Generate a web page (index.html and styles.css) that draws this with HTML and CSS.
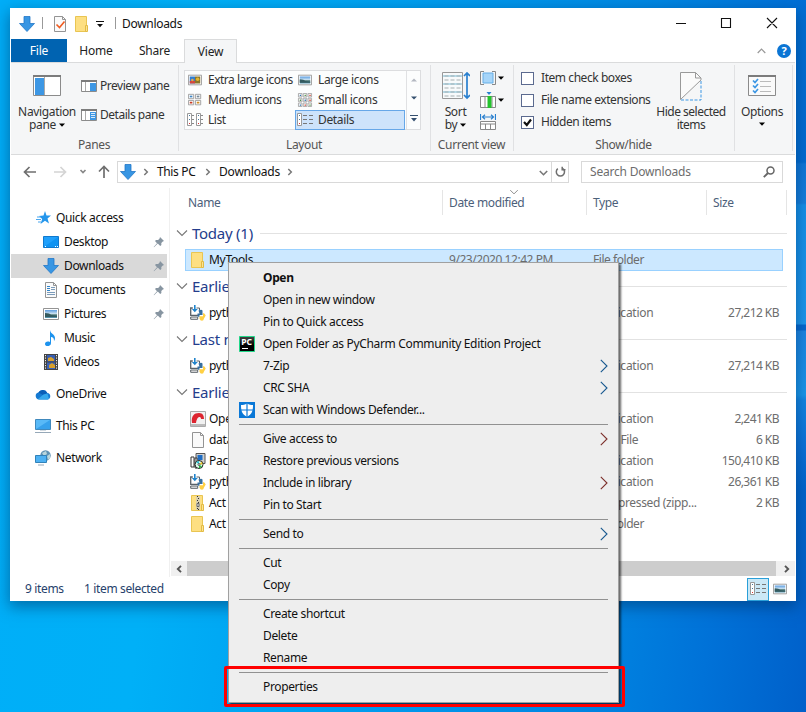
FILE: index.html
```html
<!DOCTYPE html>
<html lang="en">
<head>
<meta charset="utf-8">
<title>Downloads</title>
<link rel="stylesheet" href="styles.css">
</head>
<body>
<svg class="defs" width="0" height="0" aria-hidden="true">
  <defs>
    <linearGradient id="gPic" x1="0" y1="0" x2="0" y2="1"><stop offset="0" stop-color="#5a9ce0"/><stop offset=".5" stop-color="#d4e8f4"/><stop offset=".6" stop-color="#3e6a66"/><stop offset="1" stop-color="#5a9ab8"/></linearGradient>
    <linearGradient id="gDark" x1="0" y1="0" x2="0" y2="1"><stop offset="0" stop-color="#444"/><stop offset=".6" stop-color="#000"/></linearGradient>
    <symbol id="down" viewBox="0 0 16 16"><path d="M5 .5h6v7h4.500L8 15.500.5 7.500H5z" fill="#3896e3" stroke="#2277c8" stroke-width=".8"/></symbol>
    <symbol id="folder" viewBox="0 0 16 16"><path d="M1.500.5h11v15h-11z" fill="#fddf82" stroke="#e9c552"/><path d="M11.500 9.500h2v6h-2z" fill="#fbe394" stroke="#e3bb43"/></symbol>
    <symbol id="zip" viewBox="0 0 16 16"><use href="#folder"/><path d="M6 1h4v14H6z" fill="#d9cfae"/><path d="M7 1h1v1H7zm1 2h1v1H8zM7 5h1v1H7zm1 2h1v1H8zm-1 6h1v1H7zm1 1h1v1H8z" fill="#333"/><path d="M7 8.500h2v3H7z" fill="#eee" stroke="#666"/></symbol>
    <symbol id="file" viewBox="0 0 16 16"><path d="M2.500.5h8l3 3v12h-11z" fill="#fafafa" stroke="#949494"/><path d="M10.500.5v3h3" fill="none" stroke="#949494"/></symbol>
    <symbol id="doc" viewBox="0 0 16 16"><use href="#file"/><path d="M4 4.500h3M4 6.500h3M4 8.500h3" stroke="#2f83ca"/><path d="M8 5.500h4M8 7.500h4M4 10.500h8M4 12.500h8" stroke="#7c9cba"/></symbol>
    <symbol id="desk" viewBox="0 0 16 16"><path d="M.5 2.500h15v11H.5z" fill="#20a0fb" stroke="#1079ce"/><path d="M1 13L15 3v10z" fill="#0f93f2"/><path d="M2 12.500h1m9 0h1m1 0h1" stroke="#fff"/></symbol>
    <symbol id="pic" viewBox="0 0 16 16"><path d="M.5 2.500h15v11H.5z" fill="#fff" stroke="#949494"/><path d="M2 4h12v8H2z" fill="url(#gPic)"/><path d="M2 7q5 0 6 2l6 1v1H2z" fill="#345b60"/></symbol>
    <symbol id="picx" viewBox="0 0 16 16"><path d="M.5 2.500h15v11H.5z" fill="#fff" stroke="#949494"/><path d="M2 4h6v8H2z" fill="#327ed2"/><path d="M8 4h6v8H8z" fill="#8b762c"/><path d="M2 9h6v3H2z" fill="#d6463a"/><circle cx="11" cy="7" r="2" fill="#e4b632"/><circle cx="5" cy="8" r="1.500" fill="#e2a850"/></symbol>
    <symbol id="music" viewBox="0 0 16 16"><path d="M7 0c.5 4 5 4 5 8 0 2-1 3-1 3 0-3-1-4-3-4v6c0 4-6 4-6 1 0-2 2-3 5-2z" fill="#1d93ee"/></symbol>
    <symbol id="video" viewBox="0 0 16 16"><path d="M1 0h14v16H1z" fill="#444"/><path d="M4 1h8v6.500H4z" fill="#365db0"/><path d="M4 8.500h8V15H4z" fill="#3c62b7"/><path d="M5 4l3-1 3 2v2H5zm1 7l3-2 3 2v3H6z" fill="#d8a02c"/><path d="M2.500 1v15M13.500 1v15" stroke="#eee" stroke-dasharray="1.200 1.300"/></symbol>
    <symbol id="star" viewBox="0 0 16 16"><path d="M9 1l1.500 4.500H15l-3.500 3 1.500 5L9 10.700 4.500 14l1.700-5L3 6l4.500-.5z" fill="#2496ec"/><path d="M1 7h4M0 9.500h5M2 12h3" stroke="#4aa7ef"/></symbol>
    <symbol id="cloud" viewBox="0 0 16 16"><path d="M4 13.500a3.500 3.500 0 0 1-.6-6.900A5 5 0 0 1 12.300 7a3.300 3.300 0 0 1 .4 6.500z" fill="#1479d2"/><path d="M3.400 6.600A5 5 0 0 1 12.300 7L8 9z" fill="#0a5fb8"/><path d="M3 13l5.500-4.500 4-1 1.500 5.500-1.300.5H4z" fill="#35a8ec"/></symbol>
    <symbol id="pc" viewBox="0 0 16 16"><path d="M.5 1.500h15v10H.5z" fill="#58b9f7" stroke="#4089bd"/><path d="M1 11L15 2v9z" fill="#36a1ec"/><path d="M0 14.500h16" stroke="#96a8b8"/><path d="M5 12.500h6" stroke="#d3dbe2"/></symbol>
    <symbol id="net" viewBox="0 0 16 16"><circle cx="10.500" cy="5.500" r="5.200" fill="#5f92b4"/><path d="M7 3l4-2 1 3-3 2zM12 6l3-2v4l-2 2z" fill="#bad6dc"/><path d="M.5 5.500h11v7H.5z" fill="#4db1f3" stroke="#3182b9"/><path d="M3 15h6" stroke="#96a8b8"/></symbol>
    <symbol id="pin" viewBox="0 0 12 12"><path d="M7 1l4 4-1.200.4-1.500 1.500.1 2.100-1.200 1-2.400-2.400L1 11.300.7 11 4 7.200 2 5l1-1 2.100.1 1.500-1.600z" fill="#8795a1"/></symbol>
    <symbol id="py" viewBox="0 0 16 16"><path d="M2.800 3H.7v7.300H8" fill="none" stroke="#5a6268" stroke-width="1.300"/><path d="M6.500 3h3v2.500" fill="none" stroke="#5a6268"/><path d="M.7 12h7v2.300H.7z" fill="#eee" stroke="#5a6268"/><path d="M4 0h1.600v4h2.200L4.800 7.300 1.800 4H4z" fill="#2084cc"/><path d="M8.500 5.500q3-1.500 4 0v4.500H9.500v2l-2-.5V8.500h2z" fill="#376f9f"/><path d="M13 8q2 0 2.700 2.500L14 13.500q-.5 2.300-2 2.300-2 0-2.500-2v-2.500H13z" fill="#ffd043"/></symbol>
    <symbol id="open" viewBox="0 0 16 16"><path d="M.5.500h15v15H.5z" fill="#f1f1f1" stroke="#aaa"/><path d="M2 12C1 5 4 2 9 2c4 0 5 3 5 6h-3c0-3-4-3-5 4z" fill="#dd2530"/><path d="M1 13h14v2H1z" fill="#bbb"/></symbol>
    <symbol id="pack" viewBox="0 0 16 16"><path d="M6 .5h9v10H6z" fill="#d0d0d0" stroke="#555"/><path d="M7.500 2h5v5h-5z" fill="#1d6cc4"/><path d="M1 4h3v10H1zm4 1h2v10H5z" fill="#fff" stroke="#333"/><circle cx="9" cy="11.500" r="4" fill="#dfe" stroke="#222"/><path d="M9 11.500L6 9l3-1z" fill="#26c2d8"/><path d="M9 11.500l3 2-3 2z" fill="#22b63a"/><path d="M9 11.500l3-3 .5 3z" fill="#ecc22c"/><circle cx="9" cy="11.500" r="1" fill="#fff" stroke="#555"/></symbol>
    <symbol id="pycharm" viewBox="0 0 16 16"><path d="M.5.500h15v15H.5z" fill="url(#gDark)" stroke="#21d789"/><path d="M3 12.500h6" stroke="#fff"/><text x="2.300" y="9" font-family="Noto Sans" font-size="8.500" font-weight="700" letter-spacing="0" fill="#fff">PC</text></symbol>
    <symbol id="shield" viewBox="0 0 16 16"><path d="M0 0h16v16H0z" fill="#0a78d7"/><path d="M8 1.500C6 2.800 4 3 2 3c0 6 1 9.500 6 11.700C13 12.500 14 9 14 3c-2 0-4-.2-6-1.500z" fill="#fff"/><path d="M8 1v14M1 8h14" stroke="#0a78d7" stroke-width="1.200"/></symbol>
    <symbol id="details" viewBox="0 0 16 14"><path d="M.5.500h4v12h-4z" fill="#fff" stroke="#999"/><path d="M2 2h1v1H2zm0 4h1v1H2z" fill="#47799d"/><path d="M2 10h1v1H2z" fill="#d33"/><path d="M6 2.500h4m2 0h4M6 6.500h4m2 0h4M6 10.500h4m2 0h4" stroke="#777"/></symbol>
    <symbol id="list" viewBox="0 0 16 14"><path d="M.5.500h4v12h-4zM9.500.500h4v12h-4z" fill="#fff" stroke="#999"/><path d="M2 2h1v1H2zm9 0h1v1h-1zM2 6h1v1H2zm9 0h1v1h-1z" fill="#47799d"/><path d="M2 10h1v1H2zm9 0h1v1h-1z" fill="#d33"/><path d="M5 2.500h2m-2 4h2m-2 4h2m7-8h2m-2 4h2m-2 4h2" stroke="#888"/></symbol>
    <symbol id="medium" viewBox="0 0 16 14"><path d="M.5.500h6v5h-6zm8 0h6v5h-6zm-8 7h6v5h-6zm8 0h6v5h-6z" fill="#fff" stroke="#999"/><path d="M2 2h3v2H2z" fill="#3f86c4"/><path d="M10 2h3v2h-3z" fill="#758a99"/><path d="M2 9h3v2H2z" fill="#c93a23"/><path d="M10 9h3v2h-3z" fill="#d28c1e"/></symbol>
    <symbol id="small" viewBox="0 0 16 16"><path d="M.5.500h4v4h-4zm5.500 0h4v4H6zm5.500 0h4v4h-4zM.5 6h4v4h-4zM6 6h4v4H6zm5.500 0h4v4h-4zm-11 5.500h4v4h-4zm5.500 0h4v4H6zm5.500 0h4v4h-4z" fill="#fff" stroke="#a2a2a2"/><path d="M2 2h1.500v1.500H2zm5.500 5.500H9V9H7.500zM2 13h1.500v1.500H2z" fill="#2d76b8"/><path d="M7.500 2H9v1.500H7.500zM2 7.500h1.500V9H2zm11 5.500h1.500v1.500H13z" fill="#4e9646"/><path d="M13 2h1.500v1.500H13zm0 5.500h1.500V9H13zM7.500 13H9v1.500H7.500z" fill="#d13e2a"/></symbol>
    <symbol id="dd" viewBox="0 0 6 4"><path d="M0 .5h6L3 3.700z"/></symbol>
    <symbol id="chev" viewBox="0 0 12 8"><path d="M1 1.500l5 5 5-5" fill="none" stroke="#777" stroke-width="1.100"/></symbol>
    <symbol id="crumb" viewBox="0 0 6 8"><path d="M1.300 1l3 3-3 3" fill="none" stroke="#777" stroke-width="1.500"/></symbol>
    <symbol id="sub" viewBox="0 0 8 14"><path d="M.8 .8L7 7 .8 13.200" fill="none" stroke="currentColor" stroke-width="1.100"/></symbol>
  </defs>
</svg>

<main class="desktop">
  <section class="window">
    <header class="titlebar">
      <svg class="i16"><use href="#down"/></svg>
      <span class="tick t1"></span>
      <svg class="i16 prop" viewBox="0 0 16 16"><use href="#file"/><path d="M4.500 8.500l3 3 5-6" fill="none" stroke="#ef5b20" stroke-width="1.600"/></svg>
      <svg class="i16 qfolder"><use href="#folder"/></svg>
      <svg class="qdrop" viewBox="0 0 8 7"><path d="M0 .5h8" stroke="#111"/><path d="M1 3h6L4 6.300z" fill="#111"/></svg>
      <span class="tick t2"></span>
      <span class="title">Downloads</span>
      <svg class="caps" viewBox="0 0 102 12"><path d="M0 6.500h10M45.500 1.500h9v9h-9zM91 1l10 10m0-10L91 11" fill="none" stroke="#111" stroke-width="1.100"/></svg>
    </header>

    <nav class="tabs">
      <span class="tab file">File</span><span class="tab">Home</span><span class="tab share">Share</span><span class="tab active">View</span>
      <svg class="collapse" viewBox="0 0 9 6"><path d="M.7 5l3.800-4 3.800 4" fill="none" stroke="#999" stroke-width="1.200"/></svg>
      <span class="help">?</span>
    </nav>

    <div class="ribbon">
      <div class="group panes">
        <div class="gbody">
          <div class="big navp">
            <svg width="28" height="22" viewBox="0 0 28 22"><path d="M.5.500h27v20H.5z" fill="#fff" stroke="#8b8b8b"/><path d="M0 0h28v2H0z" fill="#7c7c7c"/><path d="M2 3h9v17H2z" fill="#3d97e4"/><path d="M11.500 2v18" stroke="#aaa"/></svg>
            <span>Navigation</span><span>pane <svg class="dd"><use href="#dd"/></svg></span>
          </div>
          <div class="stack">
            <div class="cmd"><svg width="16" height="13" viewBox="0 0 16 13"><path d="M.5.500h15v11H.5z" fill="#fff" stroke="#8b8b8b"/><path d="M0 0h16v2H0z" fill="#7c7c7c"/><path d="M4.500 2v9" stroke="#aaa"/><path d="M9 3h6v8H9z" fill="#3d97e4"/></svg><span>Preview pane</span></div>
            <div class="cmd"><svg width="16" height="13" viewBox="0 0 16 13"><path d="M.5.500h15v11H.5z" fill="#fff" stroke="#8b8b8b"/><path d="M0 0h16v2H0z" fill="#7c7c7c"/><path d="M4.500 2v9" stroke="#aaa"/><path d="M9 3h6v8H9z" fill="#3d97e4"/><path d="M10 4.500h4m-4 2h4m-4 2h4" stroke="#fff" stroke-width=".8"/></svg><span>Details pane</span></div>
          </div>
        </div>
        <div class="glabel">Panes</div>
      </div>

      <div class="group layout">
        <div class="gbody gallery">
          <div class="views">
            <span class="view"><svg class="i14"><use href="#picx"/></svg>Extra large icons</span><span class="view"><svg class="i14"><use href="#pic"/></svg>Large icons</span>
            <span class="view"><svg class="i14"><use href="#medium"/></svg>Medium icons</span><span class="view"><svg class="i16 wide"><use href="#small"/></svg>Small icons</span>
            <span class="view"><svg class="i16 wide"><use href="#list"/></svg>List</span><span class="view on"><svg class="i16 wide"><use href="#details"/></svg>Details</span>
          </div>
          <div class="spin">
            <svg viewBox="0 0 6 4"><path d="M0 3.500h6L3 .5z" fill="#b3b8c1"/></svg>
            <svg viewBox="0 0 6 4"><path d="M0 .5h6L3 3.500z" fill="#35506f"/></svg>
            <svg class="more" viewBox="0 0 8 7"><path d="M0 .5h8" stroke="#35506f"/><path d="M1 3h6L4 6.500z" fill="#35506f"/></svg>
          </div>
        </div>
        <div class="glabel">Layout</div>
      </div>

      <div class="group current">
        <div class="gbody">
          <div class="big sort">
            <svg width="28" height="28" viewBox="0 0 28 28"><path d="M.5.500h20v26H.5z" fill="#f8fafb" stroke="#999"/><path d="M1 3h19v2H1zm0 8h19v2H1zm0 8h19v2H1z" fill="#b8dcea"/><path d="M2.500 4h17M2.500 8h17M2.500 12h17M2.500 16h17M2.500 20h17M2.500 24h17" stroke="#a5aeb0" stroke-dasharray="4 2"/><path d="M25 2v23M22 4l3-3 3 3m-6 19l3 3 3-3" fill="none" stroke="#2a80cf" stroke-width="1.700"/></svg>
            <span>Sort</span><span>by <svg class="dd"><use href="#dd"/></svg></span>
          </div>
          <div class="cv">
            <span><svg width="16" height="14" viewBox="0 0 16 14"><path d="M4 .5H.5v13H4m8-13h3.500v13H12" fill="none" stroke="#888"/><path d="M3 2h10v10H3z" fill="#a6d5f9" stroke="#67aee6"/></svg><svg class="dd"><use href="#dd"/></svg></span>
            <span><svg width="16" height="16" viewBox="0 0 16 16"><path d="M.5 4.500h15v11H.5zM5 4.500v11M12 4.500v11" fill="#fff" stroke="#888"/><path d="M7.500 4h4v12h-4z" fill="#24c32d"/><path d="M6.500 0h5L9 3z" fill="#2a80cf"/></svg><svg class="dd"><use href="#dd"/></svg></span>
            <span><svg width="16" height="16" viewBox="0 0 16 16"><path d="M.5 0v6m15-6v6M2 3h12M5 .8L2.500 3 5 5.200M11 .8L13.500 3 11 5.200" fill="none" stroke="#2a80cf" stroke-width="1.200"/><path d="M.5 7.500h15v8H.5zM0 10h16M5.500 10v6m5-6v6" fill="#fff" stroke="#888"/></svg></span>
          </div>
        </div>
        <div class="glabel">Current view</div>
      </div>

      <div class="group showhide">
        <div class="gbody">
          <div class="checks">
            <span class="check"><i></i>Item check boxes</span>
            <span class="check"><i></i>File name extensions</span>
            <span class="check"><i><svg viewBox="0 0 11 11"><path d="M2 5l2.800 3L9 2.500" fill="none" stroke="#111" stroke-width="2.200"/></svg></i>Hidden items</span>
          </div>
          <div class="big hide">
            <svg width="22" height="29" viewBox="0 0 22 29"><path d="M.5 27.500V.5h15l5.500 5.500v2L.5 27.500" fill="#fafafa" stroke="#999"/><path d="M15.500.5V6H21" fill="none" stroke="#999"/><path d="M21 9v19H1" fill="none" stroke="#3d97e4" stroke-dasharray="3 1.500"/></svg>
            <span>Hide selected</span><span>items</span>
          </div>
        </div>
        <div class="glabel">Show/hide</div>
      </div>

      <div class="group options">
        <div class="gbody"><div class="big opt">
          <svg width="28" height="22" viewBox="0 0 28 22"><path d="M.5.500h27v20H.5z" fill="#fafafa" stroke="#8b8b8b"/><path d="M0 0h28v2H0z" fill="#7c7c7c"/><path d="M5 5.500l2 2 3-3.500M5 10.500l2 2 3-3.500M5 15.500l2 2 3-3.500" fill="none" stroke="#3d97e4" stroke-width="1.700"/><path d="M12 6.500h11m-11 5h11m-11 5h11" stroke="#bbb"/></svg>
          <span>Options</span><span><svg class="dd"><use href="#dd"/></svg></span>
        </div></div>
      </div>
    </div>

    <div class="address">
      <svg class="arrows" viewBox="0 0 88 14"><g fill="none" stroke-width="1.700"><path d="M13 7H1.500M6.500 2l-5 5 5 5" stroke="#6f6f6f"/><path d="M31 7h11.500M37.500 2l5 5-5 5" stroke="#d4d4d4"/><path d="M57.500 5l2.500 2.500L62.500 5" stroke="#888"/><path d="M81 13V2M76 6.500L81 1.500l5 5" stroke="#6f6f6f"/></g></svg>
      <div class="crumbs">
        <svg class="i16"><use href="#down"/></svg><svg class="crumb c1"><use href="#crumb"/></svg><span class="thispc">This PC</span><svg class="crumb c2"><use href="#crumb"/></svg><span class="dl">Downloads</span><svg class="crumb c3"><use href="#crumb"/></svg>
        <svg class="hist" viewBox="0 0 9 6"><path d="M.8 1l3.700 3.700L8.200 1" fill="none" stroke="#777" stroke-width="1.600"/></svg>
        <span class="refresh"><svg width="11" height="12" viewBox="0 0 11 12"><path d="M2.800 2.700A4.100 4.100 0 1 0 8 2.700M7.200 .8v3h3.300" fill="none" stroke="#6f6f6f" stroke-width="1.500"/></svg></span>
      </div>
      <div class="search"><span>Search Downloads</span><svg width="12" height="12" viewBox="0 0 12 12"><circle cx="7.500" cy="4.500" r="3.500" fill="none" stroke="#666" stroke-width="1.500"/><path d="M5 7L.8 11.200" stroke="#666" stroke-width="1.900"/></svg></div>
    </div>

    <div class="content">
      <aside class="side">
        <div class="node"><svg class="i16"><use href="#star"/></svg><span>Quick access</span></div>
        <div class="node child"><svg class="i16"><use href="#desk"/></svg><span>Desktop</span><svg class="pin"><use href="#pin"/></svg></div>
        <div class="node child sel"><svg class="i16"><use href="#down"/></svg><span>Downloads</span><svg class="pin"><use href="#pin"/></svg></div>
        <div class="node child"><svg class="i16"><use href="#doc"/></svg><span>Documents</span><svg class="pin"><use href="#pin"/></svg></div>
        <div class="node child"><svg class="i16"><use href="#pic"/></svg><span>Pictures</span><svg class="pin"><use href="#pin"/></svg></div>
        <div class="node child"><svg class="i16"><use href="#music"/></svg><span>Music</span></div>
        <div class="node child"><svg class="i16"><use href="#video"/></svg><span>Videos</span></div>
        <div class="node root"><svg class="i16"><use href="#cloud"/></svg><span>OneDrive</span></div>
        <div class="node root"><svg class="i16"><use href="#pc"/></svg><span>This PC</span></div>
        <div class="node root"><svg class="i16"><use href="#net"/></svg><span>Network</span></div>
      </aside>

      <div class="files">
        <div class="cols"><span class="col">Name</span><span class="col">Date modified<svg class="sorted"><use href="#chev"/></svg></span><span class="col">Type</span><span class="col">Size</span></div>
        <div class="ghead"><svg class="tw"><use href="#chev"/></svg><b>Today (1)</b><hr></div>
        <div class="row sel"><svg class="i16"><use href="#folder"/></svg><span class="nm">MyTools</span><span>9/23/2020 12:42 PM</span><span>File folder</span><span class="kb"></span></div>
        <div class="ghead"><svg class="tw"><use href="#chev"/></svg><b>Earlier</b><hr></div>
        <div class="row"><svg class="i16"><use href="#py"/></svg><span class="nm">pyth</span><span></span><span class="app">Application</span><span class="kb">27,212 KB</span></div>
        <div class="ghead"><svg class="tw"><use href="#chev"/></svg><b>Last m</b><hr></div>
        <div class="row"><svg class="i16"><use href="#py"/></svg><span class="nm">pyth</span><span></span><span class="app">Application</span><span class="kb">27,214 KB</span></div>
        <div class="ghead"><svg class="tw"><use href="#chev"/></svg><b>Earlier</b><hr></div>
        <div class="row"><svg class="i16"><use href="#open"/></svg><span class="nm">Ope</span><span></span><span class="app">Application</span><span class="kb">2,241 KB</span></div>
        <div class="row"><svg class="i16"><use href="#file"/></svg><span class="nm">data</span><span></span><span class="sqlfile">SQL File</span><span class="kb">6 KB</span></div>
        <div class="row"><svg class="i16"><use href="#pack"/></svg><span class="nm">Pack</span><span></span><span class="app">Application</span><span class="kb">150,410 KB</span></div>
        <div class="row"><svg class="i16"><use href="#py"/></svg><span class="nm">pyth</span><span></span><span class="app">Application</span><span class="kb">26,361 KB</span></div>
        <div class="row"><svg class="i16"><use href="#zip"/></svg><span class="nm">Act</span><span></span><span class="zipped">Compressed (zipp...</span><span class="kb">2 KB</span></div>
        <div class="row"><svg class="i16"><use href="#folder"/></svg><span class="nm">Act</span><span></span><span>File folder</span><span class="kb"></span></div>
        <div class="hscroll"><svg viewBox="0 0 6 8"><path d="M5 .8L1.800 4 5 7.200" fill="none" stroke="#555" stroke-width="1.900"/></svg><div class="thumb"></div><svg viewBox="0 0 6 8"><path d="M1 .8L4.200 4 1 7.200" fill="none" stroke="#555" stroke-width="1.900"/></svg></div>
      </div>
    </div>

    <footer class="status">
      <span class="s1">9 items</span><span class="s2">1 item selected</span>
      <div class="modes"><span class="mode on"><svg width="16" height="14"><use href="#details"/></svg></span><svg class="i14"><use href="#pic"/></svg></div>
    </footer>
  </section>

  <div class="menu">
    <div class="mi"><strong>Open</strong></div>
    <div class="mi"><span>Open in new window</span></div>
    <div class="mi"><span>Pin to Quick access</span></div>
    <div class="mi"><svg class="i16"><use href="#pycharm"/></svg><span class="long">Open Folder as PyCharm Community Edition Project</span></div>
    <div class="mi"><span>7-Zip</span><svg class="sub"><use href="#sub"/></svg></div>
    <div class="mi"><span>CRC SHA</span><svg class="sub"><use href="#sub"/></svg></div>
    <div class="mi"><svg class="i16"><use href="#shield"/></svg><span>Scan with Windows Defender...</span></div>
    <hr>
    <div class="mi"><span>Give access to</span><svg class="sub warm"><use href="#sub"/></svg></div>
    <div class="mi"><span>Restore previous versions</span></div>
    <div class="mi"><span>Include in library</span><svg class="sub warm"><use href="#sub"/></svg></div>
    <div class="mi"><span>Pin to Start</span></div>
    <hr>
    <div class="mi"><span>Send to</span><svg class="sub"><use href="#sub"/></svg></div>
    <hr>
    <div class="mi"><span>Cut</span></div>
    <div class="mi"><span>Copy</span></div>
    <hr>
    <div class="mi"><span>Create shortcut</span></div>
    <div class="mi"><span>Delete</span></div>
    <div class="mi"><span>Rename</span></div>
    <hr>
    <div class="mi"><span>Properties</span></div>
  </div>
  <div class="highlight"></div>
</main>
</body>
</html>
```
FILE: styles.css
```css
* { box-sizing: border-box; }
body { margin: 0; font: 12px/16px "Noto Sans", "Open Sans", sans-serif; letter-spacing: -0.36px; color: #111; overflow: hidden; }
svg { display: block; flex: none; }
.defs { position: absolute; }
.i16 { width: 16px; height: 16px; }
.i14 { width: 14px; height: 14px; }
span { white-space: nowrap; }

.desktop {
  position: relative; width: 806px; height: 712px; padding: 8px 10px; overflow: hidden;
  background:
    linear-gradient(180deg, transparent 162px, #0f78da 164px, #1580de 203px, #1591ea 205px, #1d98ee 324px, #0568cf 325px, #0568cf 330px, #1c86e4 331px, #1a98ec 395px, #1386e4 400px, #0c72da 447px, transparent 490px) 100% 0 / 12px 100% no-repeat,
    linear-gradient(97deg, #00aef8 0%, #00b0f7 24%, #00a0f0 45%, #0086e2 74%, #0072d8 88%, #0060ca 100%);
}
.window { display: flex; flex-direction: column; width: 786px; height: 593px; padding: 0 1px; background: #fff; box-shadow: 0 5px 14px 1px #00306080; }

.titlebar { display: flex; align-items: center; height: 31px; padding: 0 17px 0 8px; }
.tick { width: 1px; height: 12px; background: #999; }
.t1 { margin: -2px 9px 0 7px; }
.prop { margin-right: 6px; }
.qdrop { width: 8px; height: 7px; margin: 2px 11px 0 6px; }
.t2 { margin: -2px 7px 0 0; }
.title { letter-spacing: -.3px; margin-left: -1px; }
.caps { width: 102px; height: 12px; margin: -1px 0 0 auto; }

.tabs { display: flex; height: 24px; border-bottom: 1px solid #dadbdc; align-items: center; color: #222; letter-spacing: -.2px; }
.tab { height: 23px; line-height: 24px; width: 58px; text-align: center; }
.tab.file { background: #0063b1; color: #fff; width: 56px; }
.tab.share { width: 59px; }
.tab.active { width: 53px; height: 24px; align-self: flex-start; border: 1px solid #dadbdc; border-bottom: 0; background: #f5f6f7; line-height: 23px; }
.collapse { width: 9px; height: 6px; margin: 0 11px 0 auto; }
.help { width: 14px; height: 14px; border-radius: 50%; background: #0b75d4; color: #fff; font-weight: 700; font-size: 11px; line-height: 14px; text-align: center; margin-right: 4px; }

.ribbon { display: flex; height: 92px; padding: 2px 2px 3px 0; background: #f5f6f7; border-bottom: 1px solid #dadbdc; color: #333; letter-spacing: -.35px; }
.group { display: flex; flex-direction: column; border-right: 1px solid #e0e1e3; }
.panes { width: 168px; }
.layout { width: 252px; }
.current { width: 83px; }
.showhide { width: 221px; }
.options { width: 58px; }
.gbody { display: flex; flex: 1; }
.glabel { height: 14px; margin-bottom: -1px; text-align: center; color: #555; line-height: 14px; padding-right: 1px; }
.big { display: flex; flex-direction: column; align-items: center; line-height: 13px; }
.big > span { display: flex; align-items: center; gap: 3px; }
.dd { width: 6px; height: 4px; }
.navp { width: 72px; padding-top: 10px; }
.navp > svg { margin-bottom: 8px; }
.stack { display: flex; flex-direction: column; padding-top: 13px; gap: 13px; margin-left: -2px; }
.cmd { display: flex; align-items: center; gap: 3px; letter-spacing: -.48px; }
.gallery { align-self: flex-start; flex: none; width: 237px; height: 60px; margin: 5px 0 8px 5px; background: #fcfdfd; border: 1px solid #dcdddf; }
.views { display: grid; grid-template-columns: 110px 110px; grid-template-rows: repeat(3, 1fr); width: 221px; margin: -1px 0; letter-spacing: -.5px; }
.view { display: flex; align-items: center; gap: 6px; padding-left: 3px; }
.view .wide { margin: 0 -1px; height: 14px; }
.view:nth-child(even) { letter-spacing: -.35px; }
.view.on { border: 1px solid #66a7e8; background: #cde3fb; padding-left: 2px; }
.spin { flex: 1; display: flex; flex-direction: column; justify-content: space-around; align-items: center; border-left: 1px solid #e0e1e3; }
.spin svg { width: 6px; height: 4px; }
.spin .more { width: 8px; height: 7px; }
.sort { width: 49px; padding-top: 7px; }
.sort > svg { margin: 0 0 5px 1px; }
.cv { display: flex; flex-direction: column; gap: 6px; padding-top: 5px; }
.cv span { display: flex; align-items: center; gap: 2px; height: 16px; }
.checks { display: flex; flex-direction: column; gap: 6px; width: 142px; padding: 5px 0 0 7px; letter-spacing: -.44px; }
.check { display: flex; align-items: center; gap: 7px; }
.check i { width: 13px; height: 13px; border: 1px solid #5b6a8f; background: #fff; flex: none; }
.check svg { width: 11px; height: 11px; }
.hide { width: 70px; padding-top: 7px; letter-spacing: -.5px; }
.hide > svg { margin-bottom: 4px; }
.opt { width: 54px; padding-top: 10px; }
.opt > svg { margin-bottom: 8px; }
.opt > span:last-child { height: 12px; }

.address { display: flex; align-items: center; height: 33px; padding: 1px 12px 0 12px; }
.arrows { width: 88px; height: 14px; margin-right: 6px; }
.crumbs { display: flex; align-items: center; width: 452px; height: 22px; border: 1px solid #d9d9d9; padding-left: 2px; }
.crumb { width: 6px; height: 8px; }
.c1 { margin: 0 8px 0 7px; }
.c2 { margin: 0 8px 0 8px; }
.c3 { margin-left: 8px; }
.thispc { width: 40px; }
.dl { width: 60px; letter-spacing: -.2px; }
.hist { width: 9px; height: 6px; margin: 2px 3px 0 auto; }
.refresh { display: flex; align-items: center; justify-content: center; width: 17px; height: 20px; border-left: 1px solid #d9d9d9; }
.search { display: flex; align-items: center; justify-content: space-between; width: 202px; height: 22px; margin-left: 12px; padding: 0 7px 0 8px; border: 1px solid #d9d9d9; color: #6d6d6d; letter-spacing: -.5px; letter-spacing: -.2px; }

.content { display: flex; height: 389px; }
.side { width: 159px; border-right: 1px solid #f0f0f0; padding: 18px 2px 0 0; }
.node { display: flex; align-items: center; gap: 5px; height: 24px; padding: 0 4px 0 24px; }
.node:first-child { padding-left: 25px; gap: 4px; }
.child { padding-left: 32px; }
.side .sel { background: #d9d9d9; }
.root { margin-top: 8px; }
.pin { width: 12px; height: 12px; margin-left: auto; margin-right: -2px; }

.files { width: 625px; }
.cols { display: grid; grid-template-columns: 273px 144px 120px 80px; height: 29px; padding-top: 2px; color: #4c607a; }
.col { position: relative; height: 25px; line-height: 25px; padding-left: 6px; border-right: 1px solid #e5e5e5; }
.col:first-child { padding-left: 18px; }
.sorted { position: absolute; left: 66px; top: -1px; width: 10px; height: 6px; }
.ghead { display: flex; align-items: center; height: 32px; padding: 0 8px 0 6px; color: #243d8c; }
.ghead b { font-weight: 400; font-size: 15px; letter-spacing: -.25px; margin-left: 4px; white-space: nowrap; }
.ghead hr { flex: 1; border: 0; border-top: 1px solid #e2e2e2; margin: 1px 0 0 7px; }
.tw { width: 12px; height: 8px; }
.row { display: grid; grid-template-columns: 19px 240px 144px 114px 72px; align-items: center; height: 21px; margin: 0 12px 0 15px; padding-left: 5px; color: #6d6d6d; letter-spacing: -.45px; }
.row.sel { height: 22px; margin-bottom: -1px; padding-left: 4px; background: #cce8ff; border: 1px solid #99d1ff; }
.nm { color: #111; letter-spacing: -.3px; }
.app { letter-spacing: -.25px; }
.kb { text-align: right; margin-right: -1px; padding-right: 1px; letter-spacing: -.55px; }
.sqlfile { padding-left: 4px; }
.zipped { letter-spacing: -.36px; }
.hscroll { display: flex; align-items: center; height: 15px; margin: 27px 0 0 1px; background: #f0f0f0; }
.hscroll svg { width: 6px; height: 8px; margin: 0 5px; }
.thumb { flex: 1; height: 15px; background: #cdcdcd; margin-right: 3px; }

.status { display: flex; align-items: center; height: 24px; padding: 0 8px 0 14px; color: #26416b; }
.s1 { width: 59px; }
.modes { display: flex; align-items: center; gap: 4px; margin-left: auto; }
.mode { display: flex; align-items: center; justify-content: center; width: 22px; height: 23px; border: 1px solid #2a9fd8; background: #cbe8f6; }

.menu { position: absolute; left: 228px; top: 262px; width: 391px; height: 441px; padding: 4px 0; border: 1px solid #a0a0a0; background: #eee; box-shadow: 2px 2px 2px #0009; }
.mi { display: flex; align-items: center; height: 22px; padding-left: 34px; color: #111; }
.mi .i16 { margin: 0 8px 0 -24px; }
.mi .long { letter-spacing: -.33px; }
.menu hr { border: 0; border-top: 1px solid #919191; margin: 3px 10px; height: 1px; }
.sub { width: 8px; height: 14px; margin: 0 10px 0 auto; color: #17588f; }
.sub.warm { color: #7c2f2a; }
.highlight { position: absolute; left: 224px; top: 666px; width: 401px; height: 41px; border: 3px solid #f00; border-radius: 2px; }
```
